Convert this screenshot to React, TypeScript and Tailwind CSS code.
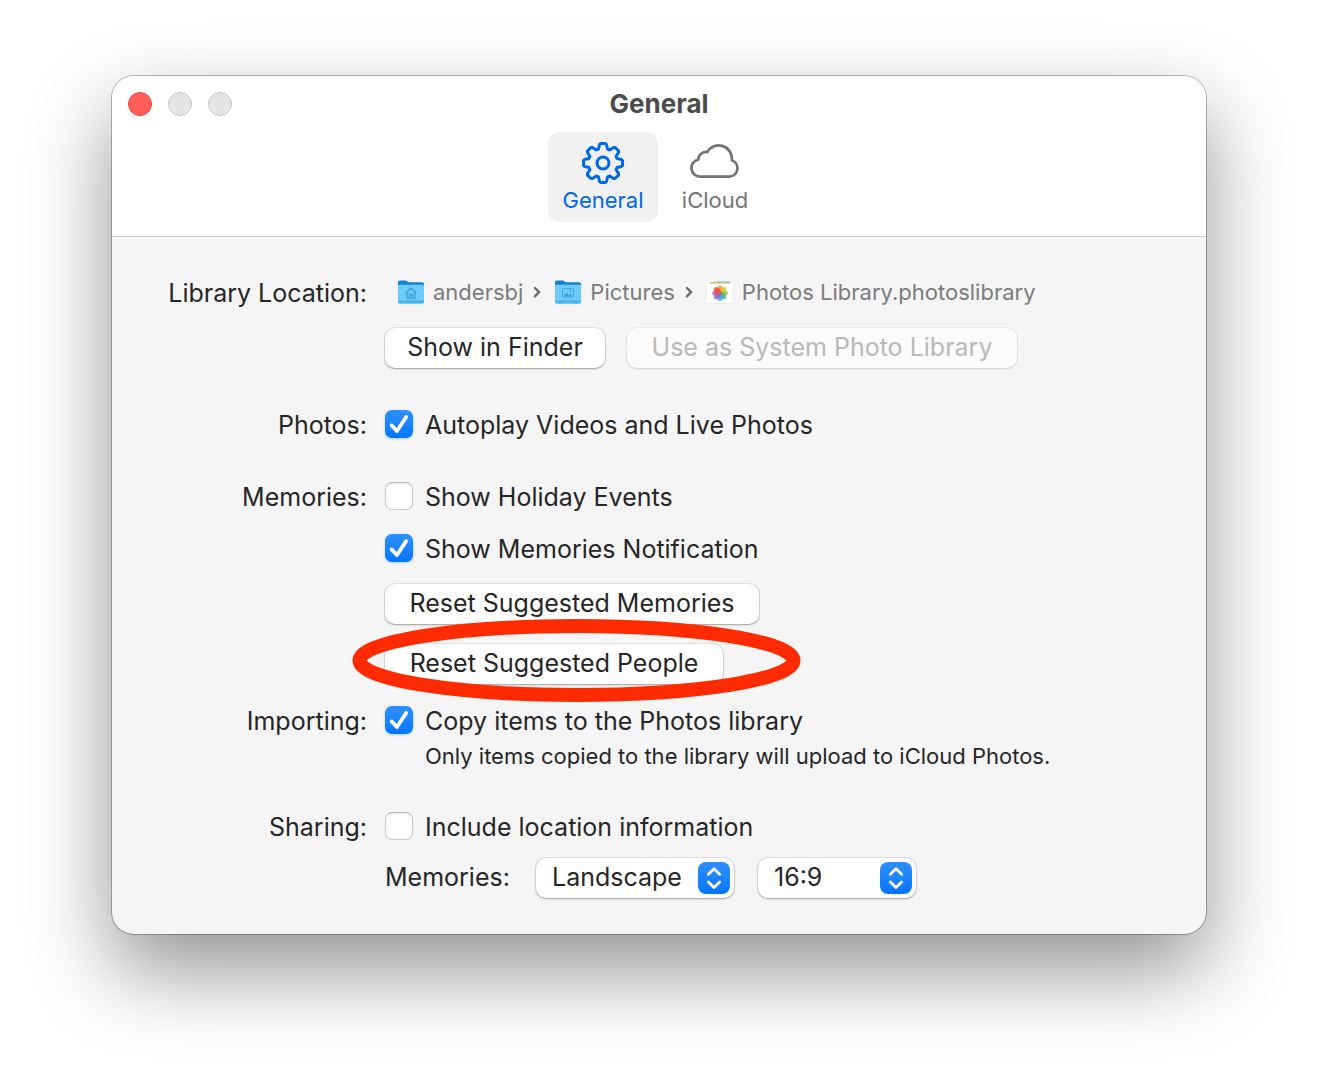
import React from 'react';

type CheckboxProps = {
  id: string;
  label: string;
  defaultChecked?: boolean;
};

// One tooth of the gear, repeated every 45 degrees
const tooth = [
  [-4.5, -14],
  [-3.5, -18.4],
  [-2.4, -19.5],
  [2.4, -19.5],
  [3.5, -18.4],
  [4.5, -14],
];

const gearPath = () => {
  const parts: string[] = [];
  for (let i = 0; i < 8; i++) {
    const a = (i * Math.PI) / 4;
    tooth.forEach(([x, y]) => {
      const px = x * Math.cos(a) - y * Math.sin(a);
      const py = x * Math.sin(a) + y * Math.cos(a);
      parts.push(`${parts.length ? 'L' : 'M'}${px.toFixed(2)} ${py.toFixed(2)}`);
    });
  }
  return parts.join('') + 'Z';
};

const GearIcon: React.FC = () => (
  <svg className="w-[42px] h-[42px]" viewBox="-21 -21 42 42" fill="none" stroke="currentColor" strokeWidth="3" strokeLinejoin="round" aria-hidden="true">
    <path d={gearPath()} />
    <circle r="6" />
  </svg>
);

const CloudIcon: React.FC = () => (
  <svg className="w-[50px] h-[34px]" viewBox="0 0 50 34" fill="none" stroke="currentColor" strokeWidth="2.8" strokeLinejoin="round" aria-hidden="true">
    <path d="M10.2 32.6A8.6 8.6 0 0 1 8.2 15.6A8 8 0 0 1 17.3 8A13.2 13.2 0 0 1 41.8 16.3A8.4 8.4 0 0 1 39.6 32.6Z" />
  </svg>
);

const FolderIcon: React.FC<{ children: React.ReactNode }> = ({ children }) => (
  <svg className="w-[26px] h-6 shrink-0 drop-shadow-xs" viewBox="0 0 26 24" aria-hidden="true">
    <path d="M0 2.2Q0 .5 1.7 .5H7.4Q8.6 .5 9.4 1.2L10 1.7Q10.7 2.2 11.6 2.2H24Q26 2.2 26 4V9H0Z" fill="#1286cd" />
    <path d="M0 6Q0 4.8 1.2 4.8H24.8Q26 4.8 26 6V21.5Q26 23.5 24 23.5H2Q0 23.5 0 21.5Z" fill="#6ccbf8" />
    <path d="M0 20.6H26V21.5Q26 23.5 24 23.5H2Q0 23.5 0 21.5Z" fill="#4db2e6" />
    {children}
  </svg>
);

const petals = ['#f7941e', '#e9c31a', '#8fc53f', '#3db88b', '#4a9fe0', '#7b6fc9', '#b861b0', '#ee4a3f'];

const PhotosIcon: React.FC = () => (
  <svg className="w-[26px] h-6 shrink-0 drop-shadow-xs" viewBox="0 0 26 24" aria-hidden="true">
    <path d="M3 2.8L11 1.4L23 1V4H3Z" fill="#8ed7ee" />
    <path d="M3 2.2L13 1.2V3H3Z" fill="#b9dd7b" />
    <path d="M3 2.8L23 2.4V4H3Z" fill="#f2a04e" />
    <rect y="3.4" width="26" height="19.6" rx="1.5" fill="#fff" />
    {petals.map((color, i) => (
      <ellipse key={color} cx="13" cy="9.4" rx="2.7" ry="4" fill={color} fillOpacity="0.85" transform={`rotate(${i * 45} 13 13.2)`} />
    ))}
    <circle cx="13" cy="13.2" r="1.6" fill="#c8683c" />
  </svg>
);

const Separator: React.FC = () => (
  <svg className="w-2 h-3 ml-[10px] mr-[14px] shrink-0" viewBox="0 0 8 12" fill="none" stroke="#6e6e6e" strokeWidth="2.5" strokeLinecap="round" strokeLinejoin="round" aria-hidden="true">
    <path d="M2 2L6 6.2L2 10.4" />
  </svg>
);

const Row: React.FC<{ label: string; children: React.ReactNode }> = ({ label, children }) => (
  <section className="grid grid-cols-[255px_1fr] gap-x-[18px]">
    <h2 className="h-8 text-right leading-[34px]">{label}</h2>
    <div className="flex flex-col items-start gap-5">{children}</div>
  </section>
);

const Checkbox: React.FC<CheckboxProps> = ({ id, label, defaultChecked }) => (
  <div className="flex items-center h-8">
    <span className="relative w-7 h-7 shrink-0">
      <input
        id={id}
        type="checkbox"
        defaultChecked={defaultChecked}
        className="peer block appearance-none w-7 h-7 rounded-[7px] bg-white border border-[#c9c9c9] border-t-[#b5b5b5] shadow-[inset_0_2px_2px_rgba(0,0,0,0.06)] checked:border-0 checked:bg-linear-to-b checked:from-[#2e90ff] checked:to-[#0076ff] checked:shadow-[0_1px_3px_rgba(0,118,255,0.3)]"
      />
      <svg className="hidden peer-checked:block absolute inset-0 pointer-events-none" viewBox="0 0 28 28" fill="none" stroke="#fff" strokeWidth="3.8" strokeLinecap="round" strokeLinejoin="round" aria-hidden="true">
        <path d="M6.6 15.4L11.9 21L21.2 7" />
      </svg>
    </span>
    <label htmlFor={id} className="h-8 pl-3 leading-[34px] whitespace-nowrap">{label}</label>
  </div>
);

const PushButton: React.FC<{ width: string; disabled?: boolean; children: React.ReactNode }> = ({ width, disabled, children }) => (
  <button
    type="button"
    disabled={disabled}
    className={`${width} h-10 px-5 rounded-[10px] bg-white whitespace-nowrap shadow-[0_0_0_1px_rgba(0,0,0,0.07),0_1px_2px_rgba(0,0,0,0.3)] disabled:bg-[#fbfbfb] disabled:text-[#b9b9b9] disabled:shadow-[0_0_0_1px_rgba(0,0,0,0.04),0_1px_2px_rgba(0,0,0,0.12)]`}
  >
    {children}
  </button>
);

const PopUp: React.FC<{ label: string; width: string; options: string[] }> = ({ label, width, options }) => (
  <div className={`relative h-10 ${width}`}>
    <select
      aria-label={label}
      className="block appearance-none w-full h-10 pl-4 rounded-[10px] bg-white shadow-[0_0_0_1px_rgba(0,0,0,0.07),0_1px_2px_rgba(0,0,0,0.3)]"
    >
      {options.map((option) => (
        <option key={option}>{option}</option>
      ))}
    </select>
    <span className="absolute top-1 right-1 w-8 h-8 rounded-lg bg-linear-to-b from-[#2e90ff] to-[#0076ff] pointer-events-none">
      <svg viewBox="0 0 32 32" fill="none" stroke="#fff" strokeWidth="2.8" strokeLinecap="round" strokeLinejoin="round" aria-hidden="true">
        <path d="M10.4 12.2L16 6.8L21.6 12.2M10.4 20L16 25.4L21.6 20" />
      </svg>
    </span>
  </div>
);

export default function App() {
  return (
    <div className="min-h-screen bg-white px-28 pt-[76px] pb-[148px] font-['Inter',sans-serif] text-[25px] text-[#262626]">
      <main className="rounded-[22px] overflow-hidden bg-[#f5f5f5] shadow-[0_0_0_1px_rgba(0,0,0,0.26),0_36px_84px_rgba(0,0,0,0.43)]">
        <header className="bg-white border-b border-[#cfcfcf] pb-[14px]">
          <div className="grid grid-cols-[1fr_auto_1fr] items-center h-14 px-4">
            <div className="flex gap-4">
              <button type="button" aria-label="Close" className="w-6 h-6 rounded-full bg-[#ff5f57] border border-[#e2463f]" />
              <button type="button" aria-label="Minimize" disabled className="w-6 h-6 rounded-full bg-[#e5e5e5] border border-[#c8c8c8]" />
              <button type="button" aria-label="Zoom" disabled className="w-6 h-6 rounded-full bg-[#e5e5e5] border border-[#c8c8c8]" />
            </div>
            <h1 className="text-[26px] leading-8 font-bold text-[#4c4c4c]">General</h1>
          </div>
          <nav className="flex justify-center gap-0.5 text-[22px] leading-7">
            <button type="button" className="flex flex-col items-center w-[110px] h-[90px] pt-[10px] rounded-xl bg-[#f1f1f1] text-[#0068ea]">
              <GearIcon />
              <span className="mt-0.5">General</span>
            </button>
            <button type="button" className="flex flex-col items-center w-[110px] h-[90px] pt-3 text-[#757575]">
              <CloudIcon />
              <span className="mt-2">iCloud</span>
            </button>
          </nav>
        </header>

        <div className="flex flex-col gap-10 pt-[39px] pb-9">
          <Row label="Library Location:">
            <div className="flex items-center h-8 pl-[13px] text-[22px] text-[#7c7c7c] whitespace-nowrap">
              <FolderIcon>
                <path d="M7.5 13L13 8.2L18.5 13M9.2 12.5V18.2H11.8V14.6H14.2V18.2H16.8V12.5" fill="none" stroke="#3fa6dc" strokeWidth="1.5" />
              </FolderIcon>
              <span className="ml-[9px]">andersbj</span>
              <Separator />
              <FolderIcon>
                <rect x="7.5" y="8.5" width="11" height="8.5" rx="1" fill="none" stroke="#3fa6dc" />
                <path d="M8 16.5L11.5 12.5L14 15L15.5 13.8L18 16.5Z" fill="#3fa6dc" />
                <circle cx="15.7" cy="11" r="1" fill="#3fa6dc" />
              </FolderIcon>
              <span className="ml-[9px]">Pictures</span>
              <Separator />
              <PhotosIcon />
              <span className="ml-[9px]">Photos Library.photoslibrary</span>
            </div>
            <div className="flex gap-[22px]">
              <PushButton width="min-w-[220px]">Show in Finder</PushButton>
              <PushButton width="min-w-[390px]" disabled>Use as System Photo Library</PushButton>
            </div>
          </Row>

          <Row label="Photos:">
            <Checkbox id="autoplay" label="Autoplay Videos and Live Photos" defaultChecked />
          </Row>

          <div className="flex flex-col gap-5">
            <Row label="Memories:">
              <Checkbox id="holiday" label="Show Holiday Events" />
              <Checkbox id="notification" label="Show Memories Notification" defaultChecked />
              <PushButton width="min-w-[374px]">Reset Suggested Memories</PushButton>
              <div className="relative">
                <PushButton width="min-w-[338px]">Reset Suggested People</PushButton>
                <svg className="absolute -left-[33px] -top-[25px] w-[449px] h-[83px] max-w-none pointer-events-none" viewBox="0 0 449 83" fill="none" stroke="#ff2a00" strokeWidth="14" aria-hidden="true">
                  <ellipse cx="224.5" cy="41.5" rx="217" ry="34.5" />
                </svg>
              </div>
            </Row>
            <Row label="Importing:">
              <div>
                <Checkbox id="copy-items" label="Copy items to the Photos library" defaultChecked />
                <p className="mt-1.5 pl-10 text-[22px] leading-7">Only items copied to the library will upload to iCloud Photos.</p>
              </div>
            </Row>
          </div>

          <Row label="Sharing:">
            <div>
              <Checkbox id="location" label="Include location information" />
              <div className="flex items-center mt-4">
                <span className="w-[151px]">Memories:</span>
                <PopUp label="Orientation" width="w-[198px]" options={['Landscape', 'Portrait']} />
                <span className="w-6" />
                <PopUp label="Aspect ratio" width="w-[158px]" options={['16:9', '4:3']} />
              </div>
            </div>
          </Row>
        </div>
      </main>
    </div>
  );
}
